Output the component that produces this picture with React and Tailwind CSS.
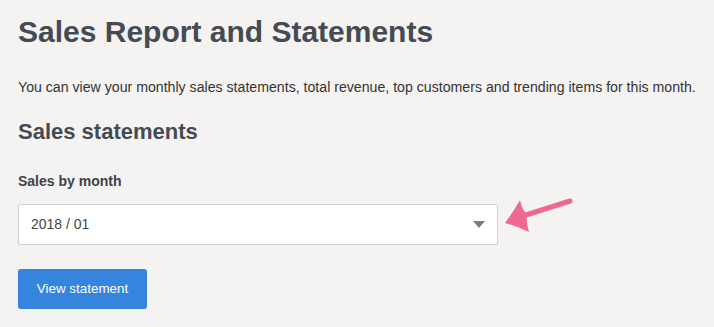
export default function App() {
  return (
    <div className="min-h-[327px] w-full bg-[#f4f3f2] px-[18px] pt-[14px] pb-[18px] font-['Liberation_Sans',Arial,sans-serif]">
      <h1 className="text-[30px] font-bold leading-[36px] text-[#454b52]">Sales Report and Statements</h1>
      <p className="mt-[28px] text-[14.15px] leading-[18px] text-[#333]">
        You can view your monthly sales statements, total revenue, top customers and trending items for this month.
      </p>
      <h2 className="mt-[23px] text-[22px] font-bold leading-[26px] text-[#454b52]">Sales statements</h2>
      <div className="mt-[27px] text-[14px] font-bold leading-[18px] text-[#3d4248]">Sales by month</div>
      <div className="mt-[14px] flex items-start gap-[4px]">
        <div className="flex h-[41px] w-[480px] items-center justify-between rounded-[2px] border border-[#cfcfcf] bg-white pl-[12px] pr-[12px]">
          <span className="text-[14px] text-[#444]">2018 / 01</span>
          <svg width="12" height="7" viewBox="0 0 12 7"><path d="M0 0 L12 0 L6 7 Z" fill="#7d7d7d" /></svg>
        </div>
        <svg width="74" height="40" viewBox="0 0 74 40" className="-mt-[6px]">
          <path d="M24 17 L68 3" stroke="#f06891" strokeWidth="5" strokeLinecap="round" />
          <path d="M3 25 Q12 13 18 2 Q20 12 25 16 Q24 25 27 34 Q15 28 3 25 Z" fill="#f06891" />
        </svg>
      </div>
      <button className="mt-[24px] h-[40px] w-[129px] rounded-[3px] bg-[#3584dd] text-[13.4px] text-white">View statement</button>
    </div>
  );
}
